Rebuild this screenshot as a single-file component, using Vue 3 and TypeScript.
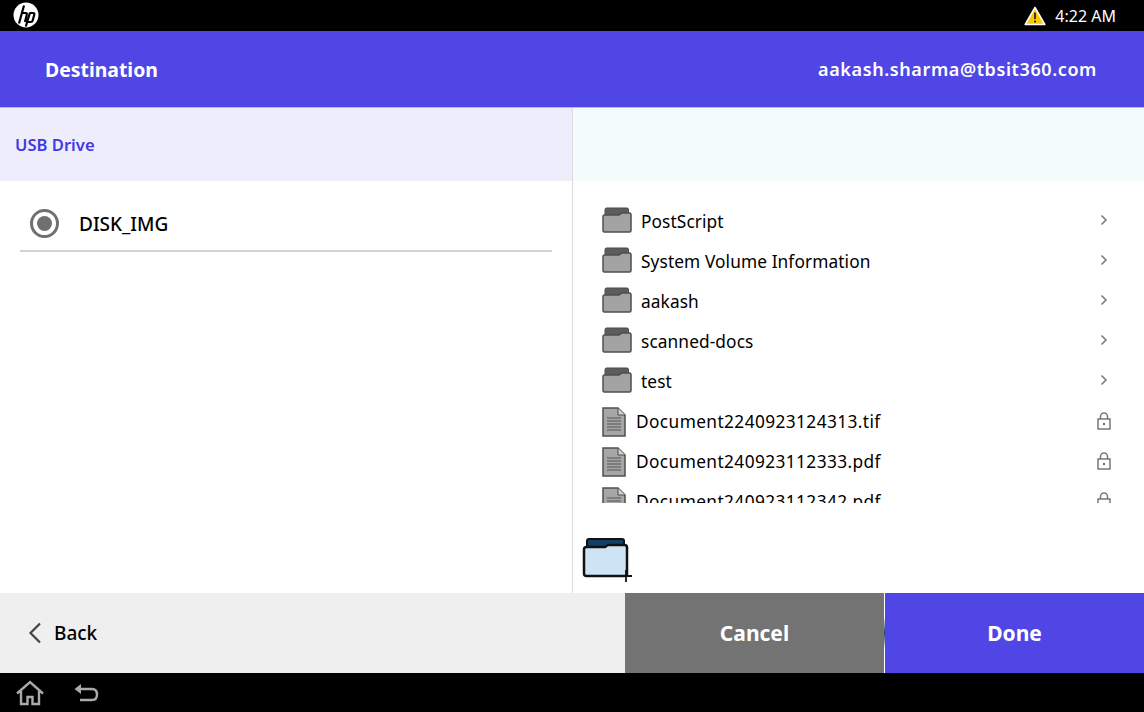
<script setup lang="ts">
const folders: string[] = ['PostScript', 'System Volume Information', 'aakash', 'scanned-docs', 'test']
const files: string[] = ['Document2240923124313.tif', 'Document240923112333.pdf', 'Document240923112342.pdf']
</script>

<template>
  <div class="screen">
    <div class="status">
      <svg class="hp" width="26" height="26" viewBox="0 0 26 26">
        <circle cx="13" cy="13" r="12.500" fill="#fff" />
        <path d="M11 3.500 6 21.500M8.300 11h4.400q1.500 0 1.100 1.500L12 20M17 10.500 12.800 24.500M16.800 11h3.400q1.500 0 1.100 1.500l-1.600 6q-.4 1.500-1.900 1.500h-3.200" fill="none" stroke="#000" stroke-width="2.200" />
      </svg>
      <div class="status-right">
        <svg width="22" height="20" viewBox="0 0 22 20">
          <path d="M11 1.500 20.800 18.500H1.200Z" fill="#ffc800" stroke="#fff" stroke-width="1.600" stroke-linejoin="round" />
          <path d="M11 6.500v6.500M11 14.500v2" stroke="#222" stroke-width="1.700" />
        </svg>
        <span>4:22 AM</span>
      </div>
    </div>

    <header class="header">
      <span class="title">Destination</span>
      <span class="user">aakash.sharma@tbsit360.com</span>
    </header>

    <main class="main">
      <section class="left">
        <div class="left-head">USB Drive</div>
        <div class="drive">
          <span class="radio"><span class="dot"></span></span>
          <span class="drive-name">DISK_IMG</span>
        </div>
      </section>

      <section class="right">
        <div class="right-head"></div>
        <div class="list">
          <div v-for="f in folders" :key="f" class="row folder-row">
            <svg class="folder" width="30" height="26" viewBox="0 0 30 26">
              <path d="M3 9V2.500Q3 1 4.500 1H25q1.500 0 1.500 1.500V8Z" fill="#5c5c5c" stroke="#4a4a4a" />
              <path d="M1 9.500Q1 8 2.500 8H17l3-2h7.500Q29 6 29 7.500v16q0 1.500-1.500 1.500h-25Q1 25 1 23.500Z" fill="#a3a3a3" stroke="#4f4f4f" stroke-width="1.500" />
            </svg>
            <span class="name">{{ f }}</span>
            <svg class="end" width="10" height="12" viewBox="0 0 10 12">
              <path d="M2.500 1.500 7 6l-4.500 4.500" fill="none" stroke="#777" stroke-width="1.500" />
            </svg>
          </div>
          <div v-for="f in files" :key="f" class="row file-row">
            <svg class="file" width="24" height="30" viewBox="0 0 24 30">
              <path d="M1 1H16L23 8V29H1Z" fill="#a6a6a6" stroke="#4f4f4f" stroke-width="1.500" />
              <path d="M16 1V8H23" fill="#d0d0d0" stroke="#4f4f4f" />
              <path d="M5 11H19M5 14H19M5 17H19M5 20H19M5 23H19" stroke="#555" stroke-width="1.100" />
            </svg>
            <span class="name">{{ f }}</span>
            <svg class="end lock" width="16" height="18" viewBox="0 0 16 18">
              <rect x="2" y="7" width="12" height="10" fill="none" stroke="#777" stroke-width="1.500" />
              <path d="M4.500 7V4.500a3.500 3.500 0 0 1 7 0V7" fill="none" stroke="#777" stroke-width="1.500" />
              <rect x="7" y="11" width="2" height="2" fill="#666" />
            </svg>
          </div>
        </div>
        <div class="new-folder">
          <svg width="48" height="44" viewBox="0 0 48 44">
            <path d="M5 10V4Q5 2 7 2H40q2 0 2 2V10Z" fill="#123f66" stroke="#111" stroke-width="2" />
            <path d="M2 12.500Q2 10 4.500 10H23l3-2h16.500q2.500 0 2.500 2.500v26q0 2.500-2.500 2.500H4.500Q2 39 2 36.500Z" fill="#cfe3f7" stroke="#111" stroke-width="2.500" />
            <path d="M38 39h12M44 33v12" stroke="#111" stroke-width="1.800" />
          </svg>
        </div>
      </section>
    </main>

    <footer class="footer">
      <div class="back">
        <svg width="14" height="22" viewBox="0 0 14 22">
          <path d="M12 1.500 2.500 11l9.500 9.500" fill="none" stroke="#444" stroke-width="2.200" />
        </svg>
        <span>Back</span>
      </div>
      <div class="btn cancel">Cancel</div>
      <div class="gap"></div>
      <div class="btn done">Done</div>
    </footer>

    <nav class="nav">
      <svg width="30" height="26" viewBox="0 0 30 26">
        <path d="M2 13.500 15 2l13 11.500M6 11v13h6.500v-7h5v7H24V11" fill="none" stroke="#aaa" stroke-width="2.400" />
      </svg>
      <svg width="26" height="20" viewBox="0 0 26 20">
        <path d="M8 1 1.500 6 8 11Z" fill="#aaa" />
        <path d="M6 6h13q5 0 5 5.500T19 17H7" fill="none" stroke="#aaa" stroke-width="2.400" />
      </svg>
    </nav>
  </div>
</template>

<style scoped>
.screen {
  width: 1144px;
  height: 712px;
  display: flex;
  flex-direction: column;
  overflow: hidden;
  background: #fff;
  font-family: "Noto Sans", "DejaVu Sans", sans-serif;
  color: #000;
}
.status {
  height: 31px;
  background: #000;
  color: #fff;
  display: flex;
  align-items: center;
  justify-content: space-between;
  padding: 0 28px 0 13px;
  box-sizing: border-box;
  flex: none;
}
.hp { display: block; margin-top: -2px; }
.status-right {
  display: flex;
  align-items: center;
  gap: 9px;
  font-size: 16px;
}
.header {
  height: 77px;
  flex: none;
  background: #4f46e5;
  color: #fff;
  display: flex;
  align-items: center;
  justify-content: space-between;
  padding: 0 47px 0 45px;
  box-sizing: border-box;
  border-bottom: 1px solid #b9b5f2;
  font-weight: 700;
}
.title { font-size: 19.400px; }
.user { font-size: 18px; font-weight: 600; letter-spacing: 0.6px; }
.main { flex: 1; display: flex; min-height: 0; }
.left { width: 572px; flex: none; }
.left-head {
  height: 73px;
  background: #eeedfb;
  color: #4338e6;
  font-size: 16.600px;
  font-weight: 600;
  padding: 25px 15px 0;
  box-sizing: border-box;
  line-height: 24px;
}
.drive {
  margin: 20px 20px 0;
  height: 51px;
  border-bottom: 2px solid #d4d4d4;
  display: flex;
  align-items: center;
  gap: 20px;
  padding: 0 10px 5px;
  box-sizing: border-box;
  width: 532px;
}
.radio {
  width: 29px;
  height: 29px;
  border: 3px solid #707070;
  border-radius: 50%;
  box-sizing: border-box;
  display: flex;
  align-items: center;
  justify-content: center;
}
.dot { width: 15px; height: 15px; background: #707070; border-radius: 50%; }
.drive-name { font-size: 19px; font-weight: 500; padding-top: 2px; }
.right {
  flex: 1;
  border-left: 1px solid #dcdcdc;
  display: flex;
  flex-direction: column;
}
.right-head { height: 73px; background: #f2fcfb; flex: none; }
.list {
  margin-top: 20px;
  height: 302px;
  overflow: hidden;
  padding-left: 29px;
  flex: none;
}
.row {
  height: 40px;
  display: flex;
  align-items: center;
  font-size: 17.300px;
  box-sizing: border-box;
}
.folder-row { letter-spacing: 0.1px; }
.file-row { letter-spacing: 0.4px; }
.folder { margin-right: 9px; margin-top: -2px; flex: none; }
.file { margin-right: 10px; margin-top: 2px; flex: none; }
.name { flex: 1; white-space: nowrap; }
.end { margin-right: 35px; flex: none; }
.folder-row .end { margin-top: -2px; }
.lock { margin-right: 32px; }
.new-folder { padding: 34px 0 0 9px; }
.new-folder svg { display: block; overflow: visible; }
.footer { height: 80px; flex: none; display: flex; }
.back {
  width: 625px;
  background: #efefef;
  display: flex;
  align-items: center;
  gap: 12px;
  padding-left: 28px;
  box-sizing: border-box;
  font-size: 19px;
  font-weight: 500;
  flex: none;
}
.btn {
  display: flex;
  align-items: center;
  justify-content: center;
  color: #fff;
  font-size: 21px;
  font-weight: 700;
  flex: none;
  padding-bottom: 1px;
  box-sizing: border-box;
}
.cancel { width: 259px; background: #737373; }
.gap {
  width: 1px;
  flex: none;
  background: linear-gradient(to bottom, #fff 30%, #1d3f5e 50%, #fff 70%);
}
.done { width: 259px; background: #4f46e5; }
.nav {
  height: 39px;
  flex: none;
  background: #000;
  display: flex;
  align-items: center;
  gap: 28px;
  padding-left: 15px;
}
</style>
